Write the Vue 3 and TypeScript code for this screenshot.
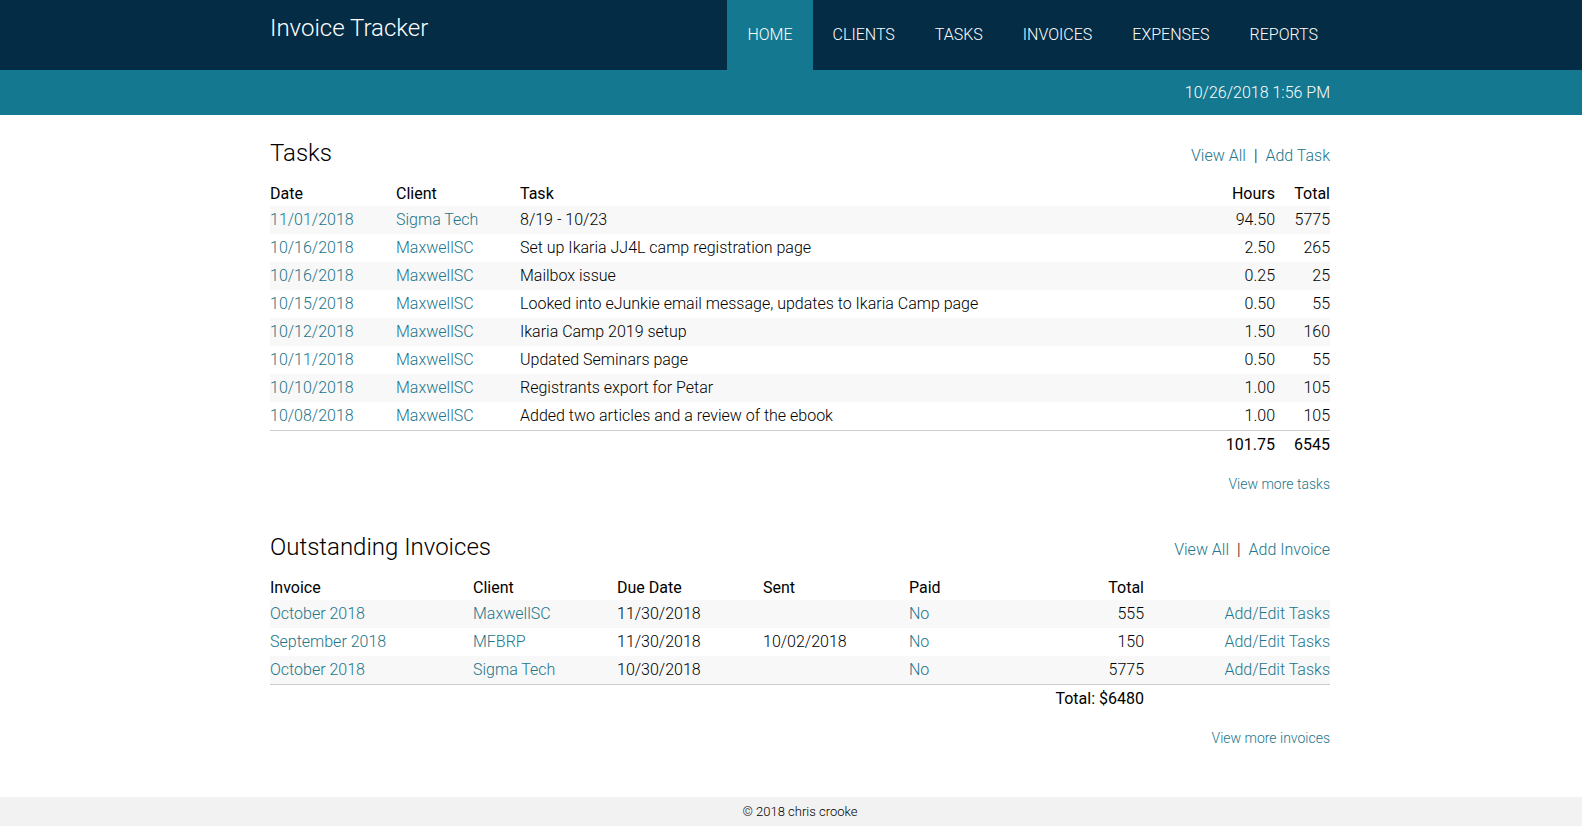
<script setup lang="ts">
interface Task {
  date: string
  client: string
  task: string
  hours: string
  total: number
}

interface Invoice {
  name: string
  client: string
  due: string
  sent: string
  paid: string
  total: number
}

const nav: string[] = ['Home', 'Clients', 'Tasks', 'Invoices', 'Expenses', 'Reports']
const current = 'Home'

const tasks: Task[] = [
  { date: '11/01/2018', client: 'Sigma Tech', task: '8/19 - 10/23', hours: '94.50', total: 5775 },
  { date: '10/16/2018', client: 'MaxwellSC', task: 'Set up Ikaria JJ4L camp registration page', hours: '2.50', total: 265 },
  { date: '10/16/2018', client: 'MaxwellSC', task: 'Mailbox issue', hours: '0.25', total: 25 },
  { date: '10/15/2018', client: 'MaxwellSC', task: 'Looked into eJunkie email message, updates to Ikaria Camp page', hours: '0.50', total: 55 },
  { date: '10/12/2018', client: 'MaxwellSC', task: 'Ikaria Camp 2019 setup', hours: '1.50', total: 160 },
  { date: '10/11/2018', client: 'MaxwellSC', task: 'Updated Seminars page', hours: '0.50', total: 55 },
  { date: '10/10/2018', client: 'MaxwellSC', task: 'Registrants export for Petar', hours: '1.00', total: 105 },
  { date: '10/08/2018', client: 'MaxwellSC', task: 'Added two articles and a review of the ebook', hours: '1.00', total: 105 },
]

const invoices: Invoice[] = [
  { name: 'October 2018', client: 'MaxwellSC', due: '11/30/2018', sent: '', paid: 'No', total: 555 },
  { name: 'September 2018', client: 'MFBRP', due: '11/30/2018', sent: '10/02/2018', paid: 'No', total: 150 },
  { name: 'October 2018', client: 'Sigma Tech', due: '10/30/2018', sent: '', paid: 'No', total: 5775 },
]
</script>

<template>
  <div class="page">
    <header class="masthead">
      <div class="container masthead-row">
        <h1 class="brand">Invoice Tracker</h1>
        <nav class="nav">
          <a
            v-for="item in nav"
            :key="item"
            href="#"
            class="nav-link"
            :class="{ active: item === current }"
            :aria-current="item === current ? 'page' : undefined"
          >{{ item }}</a>
        </nav>
      </div>
    </header>

    <div class="datebar">
      <div class="container">10/26/2018 1:56 PM</div>
    </div>

    <main class="container main">
      <section>
        <div class="section-head">
          <h2>Tasks</h2>
          <div class="actions"><a href="#">View All</a><span>|</span><a href="#">Add Task</a></div>
        </div>
        <table class="tasks">
          <colgroup>
            <col class="t-date"><col class="t-client"><col><col class="t-hours"><col class="t-total">
          </colgroup>
          <thead>
            <tr><th>Date</th><th>Client</th><th>Task</th><th class="num">Hours</th><th class="num">Total</th></tr>
          </thead>
          <tbody>
            <tr v-for="(t, i) in tasks" :key="i">
              <td><a href="#">{{ t.date }}</a></td>
              <td><a href="#">{{ t.client }}</a></td>
              <td>{{ t.task }}</td>
              <td class="num">{{ t.hours }}</td>
              <td class="num">{{ t.total }}</td>
            </tr>
          </tbody>
          <tfoot>
            <tr><td colspan="3"></td><td class="num">101.75</td><td class="num">6545</td></tr>
          </tfoot>
        </table>
        <p class="more"><a href="#">View more tasks</a></p>
      </section>

      <section>
        <div class="section-head">
          <h2>Outstanding Invoices</h2>
          <div class="actions"><a href="#">View All</a><span>|</span><a href="#">Add Invoice</a></div>
        </div>
        <table class="invoices">
          <colgroup>
            <col class="i-name"><col class="i-client"><col class="i-date"><col class="i-date"><col class="i-paid"><col class="i-total"><col>
          </colgroup>
          <thead>
            <tr>
              <th>Invoice</th><th>Client</th><th>Due Date</th><th>Sent</th><th>Paid</th><th class="num">Total</th><td></td>
            </tr>
          </thead>
          <tbody>
            <tr v-for="(v, i) in invoices" :key="i">
              <td><a href="#">{{ v.name }}</a></td>
              <td><a href="#">{{ v.client }}</a></td>
              <td>{{ v.due }}</td>
              <td>{{ v.sent }}</td>
              <td><a href="#">{{ v.paid }}</a></td>
              <td class="num">{{ v.total }}</td>
              <td class="num"><a href="#">Add/Edit Tasks</a></td>
            </tr>
          </tbody>
          <tfoot>
            <tr><td colspan="6" class="num">Total: $6480</td><td></td></tr>
          </tfoot>
        </table>
        <p class="more"><a href="#">View more invoices</a></p>
      </section>
    </main>

    <footer class="footer">© 2018 chris crooke</footer>
  </div>
</template>

<style>
body {
  margin: 0;
  background: #fff;
}
</style>

<style scoped>
.page {
  --gutter: 18px;
  display: flex;
  flex-direction: column;
  min-height: 100vh;
  color: #000;
  font-family: Roboto, "Liberation Sans", sans-serif;
  font-size: 16px;
  font-weight: 300;
  line-height: 28px;
}

.container {
  box-sizing: border-box;
  width: 100%;
  max-width: 1078px;
  margin: 0 auto;
  padding-left: var(--gutter);
}

a {
  color: #22758a;
  text-decoration: none;
}

.masthead {
  background: #042c45;
  color: #fff;
}

.masthead-row {
  display: flex;
  justify-content: space-between;
  align-items: flex-start;
}

.brand {
  margin: 0;
  padding-top: 14px;
  font-size: 24px;
  font-weight: 300;
}

.nav {
  display: flex;
  margin-right: -8px;
}

.nav-link {
  padding: 0 20px;
  line-height: 70px;
  color: #fff;
  text-transform: uppercase;
}

.nav-link.active {
  background: #147890;
}

.datebar {
  background: #147890;
  color: #fff;
  line-height: 45px;
  text-align: right;
}

.main {
  display: flex;
  flex-direction: column;
  gap: 39px;
  padding-top: 24px;
  padding-bottom: 40px;
}

.section-head {
  display: flex;
  justify-content: space-between;
  align-items: baseline;
  margin-bottom: 15px;
}

h2 {
  margin: 0;
  font-size: 24px;
  font-weight: 300;
}

.actions {
  display: flex;
  gap: 8px;
  line-height: 20px;
}

table {
  width: 100%;
  table-layout: fixed;
  border-collapse: separate;
  border-spacing: 0;
}

th,
td {
  height: 28px;
  padding: 0;
  text-align: left;
}

th {
  font-weight: 400;
}

thead th,
thead td {
  height: 24px;
  line-height: 24px;
}

.num {
  text-align: right;
}

tbody tr:nth-child(odd) {
  background: #f8f8f8;
}

tfoot td {
  border-top: 1px solid #ccc;
  font-weight: 400;
}

.t-date {
  width: 126px;
}

.t-client {
  width: 124px;
}

.t-hours {
  width: 80px;
}

.t-total {
  width: 55px;
}

.i-name {
  width: 203px;
}

.i-client {
  width: 144px;
}

.i-date,
.i-paid {
  width: 146px;
}

.i-total {
  width: 89px;
}

.more {
  margin: 15px 0 0;
  font-size: 14px;
  line-height: 20px;
  text-align: right;
}

.footer {
  margin-top: auto;
  padding-left: var(--gutter);
  background: #f2f2f2;
  font-size: 13px;
  line-height: 29px;
  text-align: center;
}
</style>
